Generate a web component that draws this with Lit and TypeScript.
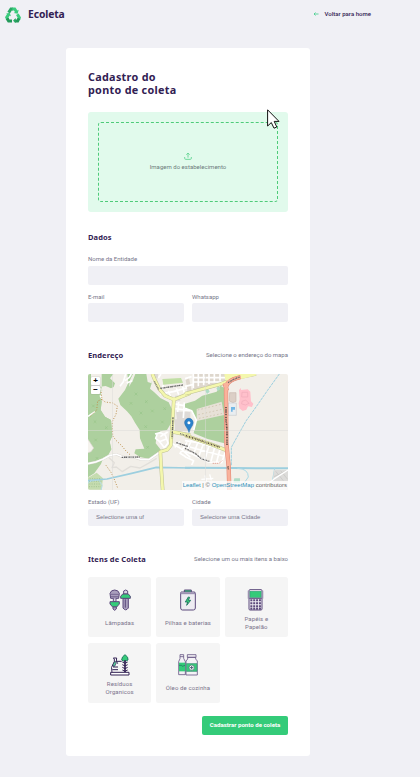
import { LitElement, html, css, svg } from "lit";
import { customElement, property } from "lit/decorators.js";

const C = "#322153";

const icons: Record<string, unknown> = {
  lamp: svg`
    <g stroke="#5d4b7c" stroke-width="3" stroke-linejoin="round">
      <path d="M5 28 L3 13 Q6 3 17 3 Q28 3 31 13 L29 28Z" fill="#a99fbc"/>
      <path d="M5 16H29M6 23H29" fill="none" stroke-width="2"/>
      <path d="M13 28V38H21V28" fill="#d9d4e3"/>
      <path d="M3 38H31V45L23 54H11L3 45Z" fill="#34cb79"/>
      <path d="M12 54H22V60L17 64L12 60Z" fill="#a99fbc"/>
      <path d="M44 15V6Q50 0 56 6V15Z" fill="#d9d4e3"/>
      <path d="M42 28H58V57Q50 68 42 57Z" fill="#a99fbc"/>
      <path d="M49 31V56" fill="none"/>
      <path d="M41 15H58L64 22V28H35V22Z" fill="#34cb79"/>
    </g>`,
  battery: svg`
    <g stroke="#5d4b7c" stroke-width="3" stroke-linejoin="round">
      <path d="M22 9V3H43V9" fill="#34cb79"/>
      <path d="M13 9H51Q55 9 55 13V57Q55 63 49 63H16Q11 63 11 57V13Q11 9 13 9Z" fill="#eeecf2"/>
      <path d="M12 14H54" stroke="#8e82a7"/>
      <path d="M34 24L25 39H32L29 49L41 34H34L38 25Z" fill="#34cb79" stroke="#287c65" stroke-width="3"/>
    </g>`,
  calc: svg`
    <g stroke="#5d4b7c" stroke-width="3">
      <path d="M9 5V29M54 5V29" stroke="#aaa0bb" stroke-width="2"/>
      <rect x="12" y="2" width="39" height="61" rx="3" fill="#f0eef4"/>
      <rect x="15" y="7" width="33" height="18" fill="#34cb79" stroke="#30a875" stroke-width="2"/>
      <path d="M13 28H50"/>
      <path d="M16 34H48M16 43H48M16 52H48M16 59H48" stroke-width="6" stroke-dasharray="6 2.6"/>
    </g>`,
  organic: svg`
    <g stroke="${C}" stroke-width="3" fill="none" stroke-linejoin="round">
      <path d="M5 55H60V63H5Z" fill="#fff"/>
      <path d="M9 55Q5 37 12 31L16 23V15L13 12H23L22 21L26 29" fill="#fff"/>
      <path d="M24 22H38M12 39H27M10 47H27"/>
      <path d="M12 31L18 21L22 27L17 37H12Z" fill="#57c99a" stroke-width="2"/>
      <path d="M48 2Q59 9 57 18L51 21H43L38 18Q38 8 48 2Z" fill="#34cb79" stroke="#287c65"/>
      <path d="M48 19V54" stroke-width="5"/>
      <path d="M40 24L48 28L56 24M40 32L48 36L56 32M40 40L48 44L56 40M40 48L48 52L56 48"/>
    </g>`,
  oil: svg`
    <g stroke="#6a5a87" stroke-width="2.5" stroke-linejoin="round">
      <path d="M9 2H20V13L25 23V62H5V23L9 14Z" fill="#f2f0f5"/>
      <path d="M9 8H20" fill="none"/>
      <path d="M6 26H25V52H6Z" fill="#34cb79" stroke="none"/>
      <path d="M6 34H14L16 37L24 34" fill="none" stroke="#287c65"/>
      <path d="M31 2H57V10H31ZM32 10H56V15L61 21V63H27V21L32 15Z" fill="#f4f2f6"/>
      <path d="M28 29H60V52H28Z" fill="#34cb79" stroke="#4c9980"/>
      <circle cx="44" cy="41" r="8" fill="#fff" stroke="#4c7b75"/>
      <path d="M44 36V46M39 41H49" stroke="#4c5a75" stroke-width="3"/>
    </g>`,
};

@customElement("item-card")
class ItemCard extends LitElement {
  @property() icon = "lamp";
  @property({ attribute: false }) lines: string[] = [];
  static styles = css`
    :host { display: flex; flex-direction: column; align-items: center; background: #f5f5f5; border-radius: 2.5px; height: 60px; box-sizing: border-box; padding-top: 12px; }
    :host(.raised) { padding-top: 11px; }
    svg { width: 22px; height: 22px; flex: none; }
    .label { flex: none; height: 16px; margin-top: 4px; display: flex; flex-direction: column; justify-content: center; text-align: center; font: 6px/8px Roboto, sans-serif; color: #7b748c; letter-spacing: 0.12px; white-space: nowrap; }
  `;
  render() {
    return html`<svg viewBox="0 0 66 66">${icons[this.icon]}</svg>
      <div class="label">${this.lines.map((l) => html`<span>${l}</span>`)}</div>`;
  }
}

@customElement("street-map")
class StreetMap extends LitElement {
  static styles = css`
    :host { display: block; position: relative; height: 116px; overflow: hidden; border-radius: 2px; background: #f2efe9; }
    svg { display: block; width: 200px; height: 116px; }
    .zoom { position: absolute; left: 3px; top: 3px; width: 9px; height: 17px; display: grid; grid-template-rows: 8px 8px; gap: 1px; background: #ccc; border-radius: 1px; box-shadow: 0 0 1px #777; }
    .zoom span { background: #fff; font: bold 8px/8px "Liberation Sans", sans-serif; text-align: center; color: #000; border-radius: 1px; }
    .credit { position: absolute; right: 0; bottom: 0; padding: 0 1px; height: 9px; background: rgba(255, 255, 255, 0.7); font: 6px/9px "Liberation Sans", sans-serif; letter-spacing: 0; color: #666; white-space: nowrap; }
    .credit a { color: #2b8fb8; }
  `;
  render() {
    return html`
      <svg viewBox="0 0 200 116">
        <g transform="translate(-3 -4) scale(.33333)" fill="none" stroke-linejoin="round">
          <path fill="#add19e" d="M9 12H18V75H46L52 60L45 50L62 48L78 55L86 51L90 40L75 25L85 12H50V66L45 76L50 95L47 120L60 140L78 150L82 198L74 215L79 238L70 255L55 263L48 282L28 310L9 322Z"/>
          <path fill="#add19e" d="M9 60H46L50 95L47 120L60 140L78 150L82 198L74 215L79 238L70 250L40 264L9 268Z"/>
          <path fill="#add19e" d="M127 12H193L200 40L195 56L207 66L226 84L251 97L262 120L258 160L246 180L226 184L215 198L212 220L228 240L212 252L190 266L165 261L148 250L152 238L178 236L165 205L164 180L150 158L139 139L126 124L106 105L100 86L120 60L130 38Z"/>
          <path fill="#f2efe9" d="M135 30L144 12H151L144 30L132 50ZM184 12H196L200 40L188 36Z"/>
          <path fill="#c5dcb0" d="M12 322L35 308L54 325L50 359H9V322Z"/>
          <path fill="#f6f3ee" stroke="#ddd8d0" stroke-width="2" d="M9 208L18 222L26 234L18 245L9 248"/>
          <g fill="#c0dfa4"><path d="M232 27L288 24L294 38L235 44Z"/></g>
          <g fill="#dedbd7">
            <path d="M273 125H316V148H276ZM270 148H316V183H270ZM203 12H219V25H203ZM270 77H286V92H270Z"/>
            <path d="M308 50H316V74H306Z"/>
          </g>
          <g stroke="#fff" stroke-width="5">
            <path d="M105 49L115 35L122 12M120 32L133 22L139 12M125 39L142 32"/>
            <path d="M9 281L32 276L55 267L75 256L94 253L120 263L148 262L166 268L192 269L206 259L225 246L245 237" stroke="#d8d5d0" stroke-width="7"/>
            <path d="M9 281L32 276L55 267L75 256L94 253L120 263L148 262L166 268L192 269L206 259L225 246L245 237"/>
            <path d="M210 192L226 188L241 196L249 219L238 233L224 215L212 205L217 192M226 200L248 186M223 215L244 207M257 218L285 234L316 262M285 215L269 232M306 217L285 250L302 260"/>
            <path d="M220 24L228 12M235 45L230 58M263 101L315 110M270 116L316 122M281 96L278 126M298 97L295 144M225 72L265 65L315 51M250 62L256 79M274 55L281 74M293 50L298 68"/>
          </g>
          <path stroke="#e2dfda" stroke-width="4" d="M72 263L88 278L81 293L94 291L112 305L137 289L165 294L190 280L215 265"/>
          <path stroke="#fff" stroke-width="4" d="M45 76L52 90M9 139L30 125"/>
          <path stroke="#bc914f" stroke-width="3" stroke-dasharray="3 5" d="M48 66L51 88L60 96L83 99L97 108L93 133L82 154L83 198L93 211L110 227L123 243L136 255M51 88L38 93L35 120L14 141M63 286L78 307L86 323L98 354"/>
          <path stroke="#9dcfdf" stroke-width="5" d="M9 332L66 327L140 310L214 292L316 294"/>
          <path stroke="#b7dce7" stroke-width="3" d="M9 335L41 330L52 346L48 360M9 340L22 329"/>
          <g>
            <path stroke="#bfc293" stroke-width="11" d="M202 12L212 35L223 57L240 77L267 89L316 69M267 82L263 146L260 187L257 227L247 239L226 245L228 285L233 360M261 185L316 196"/>
            <path stroke="#f4f7ad" stroke-width="8" d="M202 12L212 35L223 57L240 77L267 89L316 69M267 82L263 146L260 187L257 227L247 239L226 245L228 285L233 360M261 185L316 196"/>
          </g>
          <path stroke="#666" stroke-width="4" stroke-dasharray="5 2 3 1" d="M110 262L164 261M226 55L294 45M264 142L261 205M274 218L313 231"/>
          <path stroke="#777" stroke-width="4" stroke-dasharray="3 2" d="M208 34L221 58M285 191L315 200"/>
          <path stroke="#98c48a" stroke-width="2" d="M21 104l8 8m0-8l-8 8M26 151l8 8m0-8l-8 8M60 169l8 8m0-8l-8 8M28 206l8 8m0-8l-8 8M149 68l8 8m0-8l-8 8M180 91l8 8m0-8l-8 8M134 96l8 8m0-8l-8 8M164 125l8 8m0-8l-8 8M198 119l8 8m0-8l-8 8M178 166l8 8m0-8l-8 8M235 112l8 8m0-8l-8 8M228 152l8 8m0-8l-8 8M184 228l8 8m0-8l-8 8M32 261l8 8m0-8l-8 8"/>
          <path stroke="#94b985" stroke-width="2" stroke-dasharray="3 4" d="M14 326H48M12 334H49M13 342H47M12 350H48"/>
        </g>
        <g transform="translate(97 -4) scale(.33333)" fill="none" stroke-linejoin="round">
          <path fill="#add19e" d="M0 101L30 92L52 77L95 65L106 47L118 53V220L68 207L26 190L34 150L20 122L0 115Z"/>
          <path fill="#e7e1d8" d="M35 117L110 95L117 135L35 153Z"/>
          <path fill="#ded7cd" d="M2 30L12 24L20 62L9 68ZM24 12H120V45L25 66Z"/>
          <g stroke="#fff" stroke-width="5">
            <path d="M0 26L20 20M25 12V54M40 12V49M56 12V46M72 12V42M88 12V38M105 12V32M23 23H120M24 36H118M0 49L26 43M0 115L20 122L34 150L26 181"/>
            <path d="M0 212L35 217L122 240M0 245L22 252L50 266L70 276L110 278L120 248M20 210L7 238M39 216L27 249M55 222L42 257M72 227L60 267M89 232L78 273M105 237L95 276M14 231L115 258M0 260L26 272L20 285"/>
          </g>
          <path stroke="#d3cab5" stroke-width="3" stroke-dasharray="5 6" d="M38 120L108 103M40 134L111 118M42 145L113 130"/>
          <path fill="#dccfc6" stroke="#c8bab0" stroke-width="2" d="M134 68H153V94L144 98L133 93Z"/>
          <path fill="#e9edf0" stroke="#c8ccd0" stroke-width="2" d="M130 99H154V136H130Z"/>
          <path fill="#73b7e5" d="M138 111H150V119H143V125H138Z"/>
          <path fill="#ffc0cb" d="M162 60L168 54V60L188 58L196 65L198 94L205 101L201 111L189 109L184 119L173 123L163 115L161 99L164 88Z"/>
          <path stroke="#efacba" stroke-width="2" d="M171 67H188V81H170ZM171 94L182 90L192 100L182 105L170 102Z"/>
          <path fill="#afdcc7" d="M60 60L68 54L74 65L66 72ZM94 54L101 49L106 58L98 63ZM148 325H165V338H145Z"/>
          <path stroke="#9dcfdf" stroke-width="3" stroke-dasharray="9 2" d="M283 12L247 62L218 104L183 153L160 194L139 232V286"/>
          <path stroke="#9dcfdf" stroke-width="6" d="M0 293L145 294L309 295"/>
          <path stroke="#a9d8e5" stroke-width="3" d="M157 295Q190 296 190 321L178 338M269 295L262 334"/>
          <path fill="#dddcda" d="M267 300H309V334H263Z"/>
          <path stroke="#c6c5c3" stroke-width="2" d="M272 304L295 332M287 302L308 328M267 320L303 303"/>
          <path stroke="#fff" stroke-width="4" d="M49 328L85 325M60 316L64 334M74 313L79 331M230 359L270 325L309 300"/>
          <g stroke="#bfc293" stroke-width="11"><path d="M0 71L50 58L105 43L155 24L213 12M0 196L38 209L78 223L122 240"/></g>
          <g stroke="#f4f7ad" stroke-width="8"><path d="M0 71L50 58L105 43L155 24L213 12M0 196L38 209L78 223L122 240"/></g>
          <path fill="#f4f7ad" d="M118 12H213V16L157 30L121 30Z"/>
          <path stroke="#de8472" stroke-width="13" d="M167 21L147 27Q123 37 123 55L124 218L131 290L133 360M119 40L126 62"/>
          <path stroke="#f9b29c" stroke-width="10" d="M167 21L147 27Q123 37 123 55L124 218L131 290L133 360M119 40L126 62"/>
          <path stroke="#5f5148" stroke-width="5" stroke-dasharray="4 2 2 2" d="M123 111V151L126 179V225M129 289L130 300M2 197L45 211L105 232"/>
          <path stroke="#666" stroke-width="4" stroke-dasharray="4 2 2 1" d="M0 235L30 250L50 267L73 274M129 38L146 28L164 21"/>
          <path stroke="#e1a799" stroke-width="3" stroke-dasharray="4 2" d="M83 280H102L112 272"/>
        </g>
        <path d="M0 56.5H200M24.5 0V116M117.5 0V116" stroke="#dcdbd9" stroke-width=".7" opacity=".7"/>
        <path d="M101 58.5C100 54 96.6 52 96.6 48.6A4.3 4.3 0 0 1 105.2 48.6C105.2 52 102 54 101 58.5Z" fill="#2b82cb" stroke="#2569a5" stroke-width=".5"/>
        <circle cx="100.9" cy="48.8" r="1.5" fill="#fff"/>
      </svg>
      <div class="zoom"><span>+</span><span>−</span></div>
      <div class="credit"><a>Leaflet</a> | © <a>OpenStreetMap</a> contributors</div>`;
  }
}

@customElement("app-root")
class AppRoot extends LitElement {
  static styles = css`
    :host { display: block; position: relative; height: 777px; overflow: hidden; background: #f0f0f5; font: 6px/8px Roboto, sans-serif; color: #77778a; box-sizing: border-box; }
    * { box-sizing: border-box; }
    header { height: 48px; padding: 6px 49px 0 5px; display: flex; justify-content: space-between; align-items: flex-start; }
    .brand { display: flex; gap: 7px; align-items: center; height: 17px; font: bold 10.3px/17px "Noto Sans", sans-serif; letter-spacing: -0.1px; color: #322153; }
    .brand svg { width: 16px; height: 16px; }
    .back { display: flex; gap: 5px; align-items: center; height: 16px; font-weight: 500; color: #322153; letter-spacing: 0.03px; }
    .back svg { width: 6px; height: 6px; }
    main { width: 244px; height: 708px; margin-left: 66px; padding: 22px 22px 0; background: #fff; border-radius: 3px; }
    h1, h2 { margin: 0; color: #322153; font-family: "Noto Sans", sans-serif; font-weight: 700; white-space: nowrap; }
    h1 { font-size: 10.8px; line-height: 13px; height: 42px; letter-spacing: 0.3px; }
    .drop { height: 100px; padding: 10px; background: #e1faec; border-radius: 3px; }
    .dash { height: 80px; border: 1px dashed #4ecb79; border-radius: 3px; display: flex; flex-direction: column; align-items: center; padding-top: 29px; color: #6d7a7c; letter-spacing: 0.02px; }
    .dash svg { width: 8px; height: 8px; margin-bottom: 3px; flex: none; }
    .legend { display: flex; justify-content: space-between; align-items: center; height: 16px; white-space: nowrap; }
    h2 { font-size: 7.5px; line-height: 16px; letter-spacing: 0.1px; }
    .dados { margin-top: 17px; }
    .endereco { margin-top: 25px; margin-bottom: 11px; }
    .itens { margin-top: 25px; margin-bottom: 10px; }
    label { display: block; height: 8px; white-space: nowrap; }
    .box { height: 19px; background: #f0f0f5; border-radius: 2px; }
    .name { margin-top: 10px; }
    .name .box { margin-top: 3px; }
    .pair { display: grid; grid-template-columns: 96px 96px; gap: 8px; }
    .contact { margin-top: 8px; }
    .contact .box { margin-top: 2px; }
    .place { margin-top: 8px; }
    .select { height: 17px; margin-top: 3px; padding-left: 8px; font: 6px/17px "Liberation Sans", sans-serif; letter-spacing: 0; white-space: nowrap; }
    .grid { display: grid; grid-template-columns: repeat(3, 1fr); gap: 6px 5px; }
    .actions { display: flex; justify-content: flex-end; margin-top: 13px; }
    button { width: 86px; height: 19px; padding: 0 0 1px; border: 0; border-radius: 2px; background: #34cb79; color: #fff; font: 700 6.1px/18px Roboto, sans-serif; white-space: nowrap; }
    .cursor { position: absolute; left: 267px; top: 109px; width: 13px; height: 20px; }
  `;
  render() {
    return html`
      <header>
        <div class="brand">
          <svg viewBox="0 0 48 48" fill="none" stroke-width="9">
            <path stroke="#2aa865" d="M11 17L18 6H24"/>
            <path stroke="#3bcb7d" d="M22 6H29L35 15"/>
            <path fill="#3bcb7d" d="M41 8L38 20L26 18Z"/>
            <path stroke="#3bcb7d" d="M11 22L5 31L8 37"/>
            <path stroke="#239a5a" d="M6 34L11 42H21"/>
            <path fill="#3bcb7d" d="M3 20L14 17L18 28Z"/>
            <path stroke="#3bcb7d" d="M37 22L43 32L41 37"/>
            <path stroke="#239a5a" d="M42 34L38 42H29"/>
            <path fill="#2aa865" d="M32 33V48L24 41Z"/>
          </svg>
          <span>Ecoleta</span>
        </div>
        <div class="back">
          <svg viewBox="0 0 12 12" fill="none" stroke="#4fd093" stroke-width="1.8"><path d="M11 6H2M5 3L2 6L5 9"/></svg>
          <span>Voltar para home</span>
        </div>
      </header>
      <main>
        <h1>Cadastro do<br />ponto de coleta</h1>
        <div class="drop"><div class="dash">
          <svg viewBox="0 0 24 24" fill="none" stroke="#67d696" stroke-width="2.8"><path d="M12 17V3M7 8L12 3L17 8M2 15V19Q2 22 5 22H19Q22 22 22 19V15"/></svg>
          <span>Imagem do estabelecimento</span>
        </div></div>
        <div class="legend dados"><h2>Dados</h2></div>
        <div class="name"><label>Nome da Entidade</label><div class="box"></div></div>
        <div class="pair contact">
          <div><label>E-mail</label><div class="box"></div></div>
          <div><label>Whatsapp</label><div class="box"></div></div>
        </div>
        <div class="legend endereco"><h2>Endereço</h2><span>Selecione o endereço do mapa</span></div>
        <street-map></street-map>
        <div class="pair place">
          <div><label>Estado (UF)</label><div class="box select">Selectione uma uf</div></div>
          <div><label>Cidade</label><div class="box select">Selecione uma Cidade</div></div>
        </div>
        <div class="legend itens"><h2>Itens de Coleta</h2><span>Selecione um ou mais itens a baixo</span></div>
        <div class="grid">
          <item-card icon="lamp" .lines=${["Lâmpadas"]}></item-card>
          <item-card icon="battery" .lines=${["Pilhas e baterias"]}></item-card>
          <item-card icon="calc" .lines=${["Papéis e", "Papelão"]}></item-card>
          <item-card class="raised" icon="organic" .lines=${["Resíduos", "Organicos"]}></item-card>
          <item-card class="raised" icon="oil" .lines=${["Óleo de cozinha"]}></item-card>
        </div>
        <div class="actions"><button>Cadastrar ponto de coleta</button></div>
      </main>
      <svg class="cursor" viewBox="0 0 13 20"><path d="M.6 .8V17L4.3 13.6L7 19.2L9.8 18L7.2 12.4H12Z" fill="#fff" stroke="#111" stroke-width="1"/></svg>
    `;
  }
}
